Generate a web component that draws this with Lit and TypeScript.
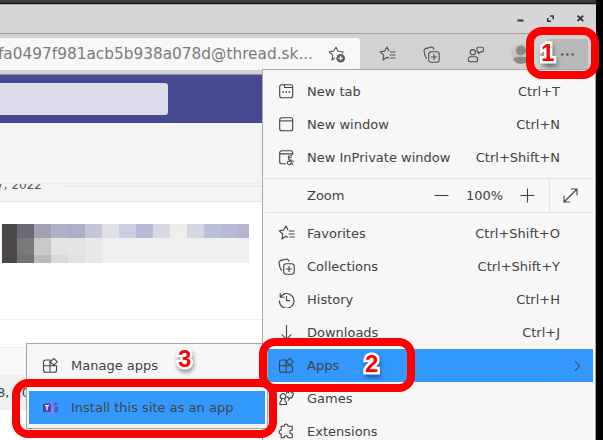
import { LitElement, html, svg, css, nothing } from "lit";
import { customElement, property } from "lit/decorators.js";

const star = svg`<path d="M10 12.2 8 11.2 4 14l.7-5L1.2 5.8l4.5-.7L8 1l2.1 4.2M11 6h5.5M10.5 9h6M11.5 12h5"/>`;

const icons: Record<string, unknown> = {
  tab: svg`<rect x="1.7" y="1.7" width="13" height="13" rx="2"/><path d="M6.5 2v2.5h8"/><path d="M4.3 9h1.6M7.4 9H9M10.5 9h1.6" stroke-width="1.5"/>`,
  window: svg`<rect x="1.7" y="1.7" width="13" height="13" rx="2"/><path d="M2 4.9h12.5"/>`,
  private: svg`<path d="M14.7 6V3.5a2 2 0 0 0-2-1.8h-9a2 2 0 0 0-2 2v9a2 2 0 0 0 2 2H8M2 4.9h12.5M14 6.8c-3-.5-4.3.7-3.3 2h2.8M11 9.3c-1 1.4.4 2.2 2.4 1.6M16.2 12.2h-5.5c-2 0-1.6 3.6.6 3.6 1.7 0 1.4-2 2.2-2s.4 2 1.7 2"/>`,
  favorites: star,
  collections: svg`<path d="M4 12.5C2.8 12 2.4 11 2 9.4L1.1 5.500C.8 4 1.3 3 2.7 2.6l5-1.4c1.5-.3 2.5.1 3 1.5l.3 1"/><rect x="5.7" y="5.7" width="10.5" height="10.5" rx="2.4"/><path d="M11 7.9v6.2M7.9 11h6.2"/>`,
  history: svg`<path d="M2.2 2v4.2h4.2M2.500 6A7.3 7.3 0 1 1 1.4 9.6M8.5 5v4.6h3.3"/>`,
  downloads: svg`<path d="M8.5 1v14.2M3.7 10.4l4.8 4.9 4.8-4.9"/>`,
  apps: svg`<path d="M8 8.5V3H3.5a2 2 0 0 0-2 2v8.3a2 2 0 0 0 2 2h9a2 2 0 0 0 2-2V8.7H1.5M8 8.5v6.8M11.8 1.4l3.5 3.4-3.5 3.4-3.4-3.4z"/>`,
  games: svg`<path d="M3.1 8.5a2.8 2.8 0 1 1 4 0M3 8.5h4.3M3.8 8.5c0 2-.7 3-1.9 4v2h6.6v-2c-1.3-1-1.9-2-1.9-4M8.4 4c-.5-2 1.6-2.4 2.2-1.4.4-2.2 3-1.8 2.9.1 2.1-.4 2.7 2.5.7 3 .8 1.4-.7 2.8-2 1.8L10 10.8M9 6.5l2.1 2.2"/>`,
  extensions: svg`<path d="M3.2 3.2h3.1c-.4-2.9 4-2.9 3.6 0h4.3v4c-3.2-.4-3.2 3.9 0 3.5v4H9.9c.4-2.6-4-2.6-3.6 0H3.2v-3.9c-2.8.4-2.8-4 0-3.6z"/>`,
  expand: svg`<path d="M2 15 15 2M8.8 2H15v6.2M2 8.8V15h6.2"/>`,
  minus: svg`<path d="M1.5 8.5h14"/>`,
  plus: svg`<path d="M1.5 8.5h14M8.5 1.5v14"/>`,
  chevron: svg`<path d="m6 4 4.6 5L6 14"/>`,
  more: svg`<path d="M2.2 8.5h2M7.4 8.5h2M12.6 8.5h2" stroke-width="2"/>`,
  addFavorite: svg`<path d="M6.8 12 4 14l.7-5L1.2 5.8l4.5-.7L8 1l2.1 4.2 5 .8-1.3 1.3"/><circle cx="12.7" cy="12.2" r="4.3" fill="#5c5c5c" stroke="none"/><path d="M12.7 9.9v4.6M10.4 12.2H15" stroke="#fff"/>`,
  feedback: svg`<circle cx="5.8" cy="6.2" r="2.6"/><rect x="1.3" y="10.8" width="9.4" height="5" rx="2.4"/><path d="M10 2.4c0-.8.5-1.1 1.2-1.1h3.8c.9 0 1.400.5 1.4 1.3v2c0 .9-.5 1.3-1.4 1.3h-1.500l-1.900 1.8V5.9H11c-.7 0-1-.4-1-1z"/>`,
  teams: svg`<g stroke="none"><circle cx="13.5" cy="5" r="1.8" fill="#5059c9"/><path d="M11.5 7.5h4.7v4a2.5 2.5 0 0 1-4.7 1z" fill="#5059c9"/><circle cx="8.8" cy="4" r="2.5" fill="#7b83eb"/><path d="M5 7.2h7.5V12c0 5-7.5 5-7.5 0z" fill="#7b83eb"/><rect x="1" y="4.5" width="8" height="8.5" rx=".8" fill="#4148a7"/><path d="M3 6.7h4M5 6.7V11.3" stroke="#fff" stroke-width="1.3"/></g>`,
};

@customElement("ui-icon")
class UiIcon extends LitElement {
  @property() name = "";
  static styles = css`
    :host { display: block; width: 17px; height: 17px; flex: none; }
    svg { display: block; fill: none; stroke: currentColor; stroke-width: 1.1; stroke-linejoin: round; }
  `;
  render() {
    return html`<svg width="17" height="17" viewBox="0 0 17 17">${icons[this.name]}</svg>`;
  }
}

@customElement("menu-row")
class MenuRow extends LitElement {
  @property() icon = "";
  @property() label = "";
  @property() keys = "";
  @property({ type: Boolean }) submenu = false;
  static styles = css`
    :host {
      display: flex; align-items: center; height: 33px; padding: 0 33px 0 13px; box-sizing: border-box;
      color: #424242; white-space: nowrap;
    }
    :host([selected]) { background: #3399ff; }
    :host([submenu]) { padding-right: 7px; }
    .icon { margin-right: 12px; }
    .label { flex: 1; }
  `;
  render() {
    return html`<ui-icon class="icon" name=${this.icon}></ui-icon><span class="label">${this.label}</span>
      ${this.keys ? html`<span>${this.keys}</span>` : nothing}
      ${this.submenu ? html`<ui-icon name="chevron"></ui-icon>` : nothing}`;
  }
}

const mosaic = [
  ["#4a484b", "#6b6974", "#a1a0b4", "#b1b1cb", "#afaec9", "#c6c6da", "#e0e0ea", "#cdcedf", "#b7b9d7", "#d9d7e2", "#f1edea", "#d5d6e4", "#b9c0dc", "#b8b8d7", "#b6b5d0"],
  ["#4b474a", "#7a787a", "#c9c9c9", "#e3e3e3", "#e4e4e4", "#e9e9e9", ...Array(9).fill("#efefef")],
  ["#4b4749", "#737171", "#bbbbbb", "#d9d9d9", "#e2e2e2", "#e9e9e9", ...Array(9).fill("#efefef")],
];

@customElement("app-root")
class AppRoot extends LitElement {
  static styles = css`
    :host {
      display: flex; position: relative; width: 603px; height: 440px; overflow: hidden; background: #000;
      font: 13px "DejaVu Sans", sans-serif; color: #424242;
    }
    .window { width: 596px; height: 440px; display: flex; flex-direction: column; background: #fff; overflow: hidden; }
    .desk { height: 3px; background: #3b3939; border-bottom: 1px solid #111; flex: none; }
    .title {
      height: 28px; flex: none; display: flex; justify-content: flex-end; align-items: center; gap: 19px;
      background: #d6d6d6; border-top: 1px solid #aaa; border-bottom: 1px solid #a0a0a0; padding-right: 10px;
    }
    .title svg { width: 11px; height: 11px; display: block; margin-top: -2px; }
    .toolbar { height: 40px; flex: none; display: flex; align-items: center; background: #d2d2d2; border-bottom: 1px solid #8c8c8c; }
    .address {
      width: 360px; height: 32px; display: flex; align-items: center; justify-content: flex-end;
      background: #f8f8f8; border-radius: 0 3px 3px 0; overflow: hidden; flex: none;
    }
    .url { font-size: 15.33px; color: #7b7b7b; margin-right: 15px; white-space: nowrap; }
    .address ui-icon { margin-right: 15px; color: #5c5c5c; }
    .tools { display: flex; align-items: center; gap: 27px; margin-left: 19px; color: #505050; }
    .avatar { width: 20px; height: 20px; margin-left: 27px; }
    .more { width: 41px; height: 31px; margin-left: 16px; display: grid; place-items: center; background: #b9b9b9; border-radius: 3px; }
    .teams { height: 48px; flex: none; display: flex; align-items: center; background: #464890; }
    .search { width: 168px; height: 32px; background: #dcdbe9; border-radius: 0 3px 3px 0; }
    .gap { height: 60px; background: #f4f4f4; flex: none; }
    .date { height: 19px; display: flex; background: #f4f4f4; border-top: 1px solid #ececec; border-bottom: 1px solid #e9e9e9; box-sizing: border-box; overflow: hidden; flex: none; }
    .date span { width: 42px; display: flex; justify-content: flex-end; line-height: 14px; margin-top: -6px; font-size: 12px; color: #555; white-space: nowrap; }
    .date i { width: 197px; height: 1px; background: #e6e6e6; margin: 2px 0 0 23px; }
    .message { height: 118px; padding: 22px 0 0 2px; box-sizing: border-box; border-bottom: 1px solid #f0f0f0; flex: none; }
    .space { height: 27px; flex: none; }
    .mosaic { width: 247px; height: 39px; display: grid; grid-template: 14px 17px 8px / 15px repeat(13, 17px) 11px; }
    .reply { height: 27px; background: #f8f8f8; border-top: 1px solid #ececec; flex: none; }
    .next { height: 35px; background: #f0f0f0; flex: none; display: flex; align-items: center; text-indent: -3px; white-space: nowrap; }
    .menu { position: absolute; left: 262px; top: 69px; width: 334px; height: 380px; box-sizing: border-box; border: 1px solid #a8a8a8; background: #f7f7f7; padding: 5px 2px; }
    .zoom { height: 33px; display: flex; align-items: center; border: solid #e2e2e2; border-width: 1px 0; margin: 4px 0; }
    .zoom .label { padding-left: 42px; flex: 1; }
    .percent { width: 69px; text-align: center; }
    .full { width: 44px; height: 33px; border-left: 1px solid #e2e2e2; margin-left: 13px; padding-right: 2px; display: grid; place-items: center; box-sizing: border-box; }
    .sub { position: absolute; left: 26px; top: 343px; width: 242px; height: 86px; box-sizing: border-box; border: 1px solid #a8a8a8; background: #f7f7f7; padding: 5px 2px 0; display: flex; flex-direction: column; gap: 9px; }
    .sub menu-row { flex: none; }
    .ring { position: absolute; border: 8px solid #fe0000; box-sizing: border-box; border-radius: 16px; }
    .r1 { left: 526px; top: 27px; width: 73px; height: 52px; }
    .r2 { left: 259px; top: 338px; width: 156px; height: 54px; }
    .r3 { left: 12px; top: 379px; width: 265px; height: 59px; }
    .num {
      position: absolute; font: bold 24px/28px "Liberation Sans", sans-serif; color: #f00;
      -webkit-text-stroke: 5px #fff; paint-order: stroke fill; filter: drop-shadow(1px 3px 2px rgba(0,0,0,.4));
    }
    .n1 { left: 541px; top: 39px; }
    .n2 { left: 365px; top: 350px; }
    .n3 { left: 178px; top: 345px; }
  `;

  render() {
    return html`
      <div class="window">
        <div class="desk"></div>
        <div class="title">
          <svg viewBox="0 0 11 11"><path d="M2.5 7.5h6" stroke="#333" stroke-width="2"/></svg>
          <svg viewBox="0 0 11 11"><path d="M5 3h3.2v3.2M2.8 5v3.2H6" fill="none" stroke="#333" stroke-width="1.5"/></svg>
          <svg viewBox="0 0 11 11"><path d="m2.6 2.6 5.6 5.6m0-5.6L2.6 8.2" stroke="#333" stroke-width="1.8"/></svg>
        </div>
        <div class="toolbar">
          <div class="address"><span class="url">fa0497f981acb5b938a078d@thread.sk...</span><ui-icon name="addFavorite"></ui-icon></div>
          <div class="tools">
            <ui-icon name="favorites"></ui-icon><ui-icon name="collections"></ui-icon><ui-icon name="feedback"></ui-icon>
          </div>
          <svg class="avatar" viewBox="0 0 20 20"><circle cx="10" cy="10" r="10" fill="#c9c5c1"/><circle cx="10" cy="6.5" r="5" fill="#8d8987"/><path d="M2.5 15c0-3 15-3 15 0-2 6.5-13 6.5-15 0z" fill="#8d8987"/></svg>
          <div class="more"><ui-icon name="more"></ui-icon></div>
        </div>
        <div class="teams"><div class="search"></div></div>
        <div class="gap"></div>
        <div class="date"><span>7, 2022</span><i></i></div>
        <div class="message">
          <div class="mosaic">${mosaic.flat().map((c) => html`<div style="background:${c}"></div>`)}</div>
        </div>
        <div class="space"></div>
        <div class="reply"></div>
        <div class="next">8, 20</div>
      </div>

      <div class="menu">
        <menu-row icon="tab" label="New tab" keys="Ctrl+T"></menu-row>
        <menu-row icon="window" label="New window" keys="Ctrl+N"></menu-row>
        <menu-row icon="private" label="New InPrivate window" keys="Ctrl+Shift+N"></menu-row>
        <div class="zoom">
          <span class="label">Zoom</span>
          <ui-icon name="minus"></ui-icon><span class="percent">100%</span><ui-icon name="plus"></ui-icon>
          <div class="full"><ui-icon name="expand"></ui-icon></div>
        </div>
        <menu-row icon="favorites" label="Favorites" keys="Ctrl+Shift+O"></menu-row>
        <menu-row icon="collections" label="Collections" keys="Ctrl+Shift+Y"></menu-row>
        <menu-row icon="history" label="History" keys="Ctrl+H"></menu-row>
        <menu-row icon="downloads" label="Downloads" keys="Ctrl+J"></menu-row>
        <menu-row icon="apps" label="Apps" selected submenu></menu-row>
        <menu-row icon="games" label="Games"></menu-row>
        <menu-row icon="extensions" label="Extensions"></menu-row>
      </div>

      <div class="sub">
        <menu-row icon="apps" label="Manage apps"></menu-row>
        <menu-row icon="teams" label="Install this site as an app" selected></menu-row>
      </div>

      <div class="ring r1"></div><div class="ring r2"></div><div class="ring r3"></div>
      <div class="num n1">1</div><div class="num n2">2</div><div class="num n3">3</div>
    `;
  }
}
